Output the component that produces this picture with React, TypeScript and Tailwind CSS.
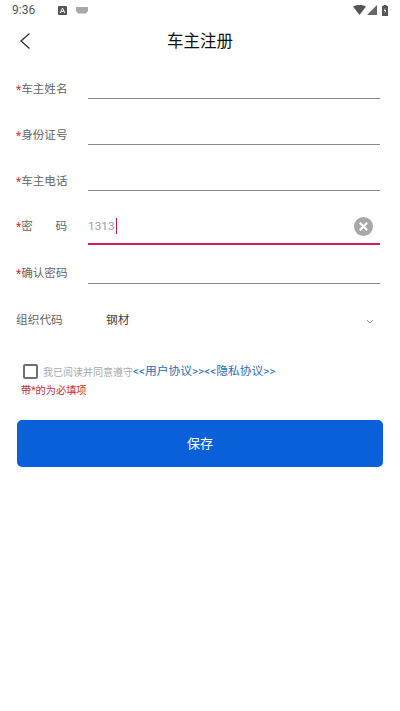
import React from "react";

function Row({ label, value, active, spaced, height, lift }: { label: string; value?: string; active?: boolean; spaced?: boolean; height: string; lift: string }) {
  return (
    <div className={`flex items-end pl-4 pr-5 ${height}`}>
      <div className={`flex h-[20px] w-[72px] shrink-0 items-center pt-[4px] text-[11.6px] text-[#666666] ${lift}`}>
        <span className="text-[12px] text-[#d0342c]">*</span>
        {spaced ? (
          <span className="flex w-[46px] justify-between"><span>密</span><span>码</span></span>
        ) : (
          <span>{label}</span>
        )}
      </div>
      <div className={active ? "relative flex h-[38px] flex-1 items-center border-b-2 border-[#d81b60] pt-[2px]" : "h-[36px] flex-1 border-b border-[#8a8a8a]"}>
        {value && (
          <>
            <span className="pt-[1px] text-[11.8px] text-[#a0a0a0]">{value}</span>
            <span className="ml-[1px] h-[16px] w-[1.5px] bg-[#c2185b]" />
            <svg className="absolute right-[7px] top-[9.5px]" width="19" height="19" viewBox="0 0 19 19">
              <circle cx="9.5" cy="9.5" r="9.5" fill="#a8a8a8" />
              <path d="M5.8 5.8 13.2 13.2M13.2 5.8 5.8 13.2" stroke="#fff" strokeWidth="2.2" />
            </svg>
          </>
        )}
      </div>
    </div>
  );
}

export default function App() {
  return (
    <div className="h-[711px] w-[400px] overflow-hidden bg-white font-['Roboto','Noto_Sans_CJK_SC',sans-serif]">
      <div className="flex h-[20px] items-center pl-3 pr-[12px] text-[12px] text-[#555555]">
        <span className="w-[35px]">9:36</span>
        <svg className="ml-[11px]" width="9" height="9" viewBox="0 0 9 9">
          <rect width="9" height="9" rx="1" fill="#555" />
          <path d="M2.2 7 4.5 2 6.8 7M3.2 5.4H5.8" stroke="#fff" strokeWidth="1" fill="none" />
        </svg>
        <svg className="ml-[9px]" width="12" height="7" viewBox="0 0 12 7">
          <path d="M0 0H12V4L10 6.5H2L0 4Z" fill="#a8a8a8" />
        </svg>
        <div className="flex-1" />
        <svg width="13" height="10" viewBox="0 0 13 10">
          <path d="M0 1.5C3.8-.6 9.2-.6 13 1.5L6.5 10Z" fill="#555" />
        </svg>
        <svg className="ml-[1px]" width="10" height="10" viewBox="0 0 10 10">
          <path d="M10 0V10H0Z" fill="#666" />
        </svg>
        <svg className="ml-[5px]" width="6" height="11" viewBox="0 0 6 11">
          <path d="M1.5 1V0H4.5V1H6V11H0V1Z" fill="#555" />
          <path d="M3.4 2.5 1.8 6H3L2.6 8.8 4.4 5H3.1Z" fill="#fff" />
        </svg>
      </div>
      <div className="relative flex h-[42px] items-center justify-center pt-[3px] text-[16.5px] text-[#111111]">
        <svg className="absolute left-[19px] top-[12px]" width="12" height="18" viewBox="0 0 12 18">
          <path d="M10.5 1.5 2 9l8.5 7.5" fill="none" stroke="#333" strokeWidth="1.3" />
        </svg>
        车主注册
      </div>
      <Row label="车主姓名" height="h-[37px]" lift="mb-[1px]" />
      <Row label="身份证号" height="h-[46px]" lift="mb-[1px]" />
      <Row label="车主电话" height="h-[46px]" lift="mb-[1px]" />
      <Row label="密码" spaced value="1313" active height="h-[54px]" lift="mb-[10px]" />
      <Row label="确认密码" height="h-[39px]" lift="mb-[2px]" />
      <div className="flex h-[70px] items-center pl-4 pr-5 pt-[4px] text-[11.7px]">
        <span className="w-[90px] text-[#666666]">组织代码</span>
        <span className="flex-1 text-[#444444]">钢材</span>
        <svg className="mr-[6px]" width="8" height="5" viewBox="0 0 8 5">
          <path d="M1 1 4 4 7 1" fill="none" stroke="#999" strokeWidth="1" />
        </svg>
      </div>
      <div className="mt-[8px] flex h-[18px] items-center pl-[23px]">
        <span className="h-[15px] w-[15px] rounded-[2px] border-2 border-[#707070]" />
        <span className="ml-[5px] pt-[2px] text-[10px] text-[#aaaaaa]">我已阅读并同意遵守</span>
        <span className="pt-[2px] text-[11.75px] text-[#2b6cb0]">&lt;&lt;用户协议&gt;&gt;&lt;&lt;隐私协议&gt;&gt;</span>
      </div>
      <div className="mt-[3px] pl-[21px] text-[10.2px] leading-[16px] text-[#c62f2f]">带*的为必填项</div>
      <div className="ml-[17px] mr-[17px] mt-[21px] flex h-[47px] items-center justify-center rounded-[5px] bg-[#0a60d8] text-[13px] text-white">保存</div>
    </div>
  );
}
